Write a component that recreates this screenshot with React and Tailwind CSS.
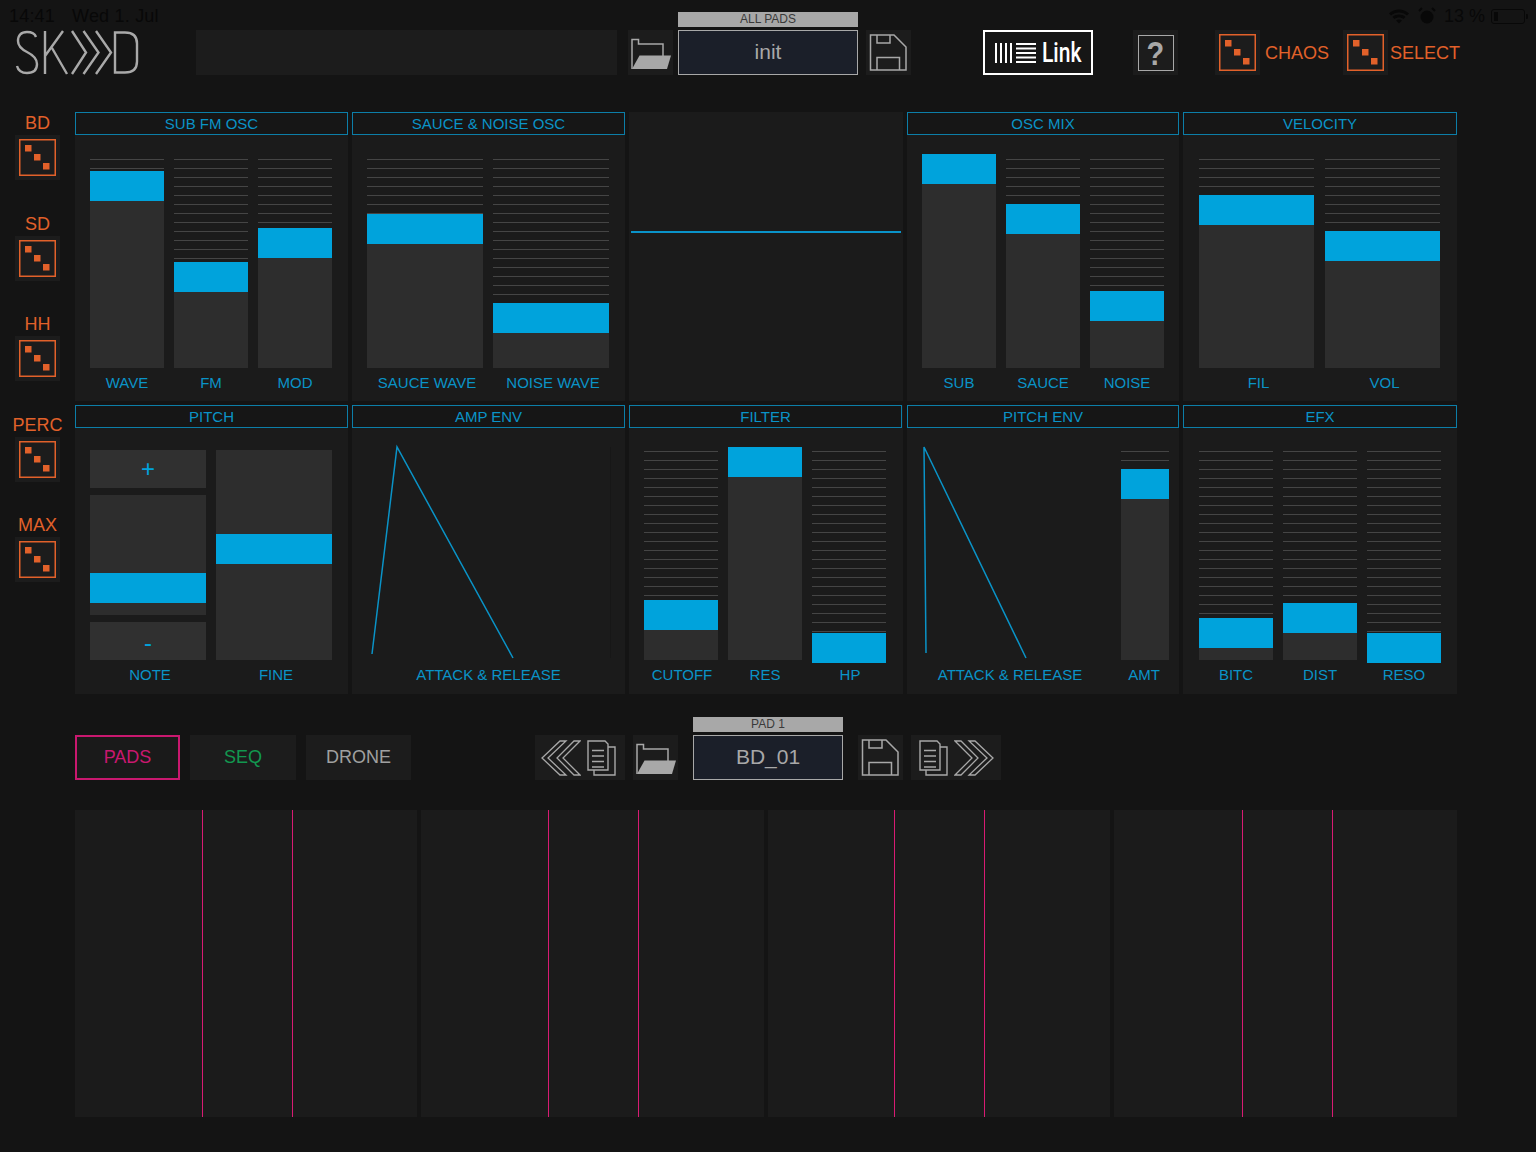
import React from "react";

function Dice() {
  return (
    <div className="w-[45px] h-[45px] bg-[#1c1c1c] flex items-center justify-center shrink-0">
      <svg width="37" height="37" viewBox="0 0 37 37">
        <rect x="0.75" y="0.75" width="35.5" height="35.5" fill="none" stroke="#e2612a" strokeWidth="1.5" />
        <rect x="6" y="6" width="6.5" height="6.5" fill="#e2612a" />
        <rect x="15" y="15" width="6.5" height="6.5" fill="#e2612a" />
        <rect x="24" y="24" width="6.5" height="6.5" fill="#e2612a" />
      </svg>
    </div>
  );
}

function FolderIcon() {
  return (
    <svg width="45" height="45" viewBox="0 0 45 45">
      <path d="M4 39V9.500h6.500V14H35v12" fill="none" stroke="#a8a8a8" strokeWidth="1.500" />
      <path d="M11.500 25.500H43L39 39H4z" fill="#a8a8a8" />
    </svg>
  );
}

function SaveIcon() {
  return (
    <svg width="45" height="45" viewBox="0 0 45 45">
      <path d="M4.500 5H28l12 12v23H4.500z" fill="none" stroke="#a8a8a8" strokeWidth="1.500" />
      <path d="M11 5v8h13V5M11 40V27.500h22.500V40" fill="none" stroke="#a8a8a8" strokeWidth="1.500" />
    </svg>
  );
}

function CopyIcon() {
  return (
    <svg width="29" height="36" viewBox="0 0 29 36">
      <path d="M1 1h17l3 3v26H1z" fill="none" stroke="#a8a8a8" strokeWidth="1.400" />
      <path d="M21 7h7v28H7v-5" fill="none" stroke="#a8a8a8" strokeWidth="1.400" />
      <path d="M5 10.500h12M5 16h12M5 21.500h12M5 27h12" stroke="#a8a8a8" strokeWidth="1.400" />
    </svg>
  );
}

function Chevrons({ flip }) {
  return (
    <svg width="40" height="36" viewBox="0 0 40 36" className={flip ? "-scale-x-100" : ""}>
      <path
        d="M1 1h6l17 17L7 35H1l17-17zM15 1h6l18 17-18 17h-6l18-17z"
        fill="none"
        stroke="#a8a8a8"
        strokeWidth="1.300"
      />
    </svg>
  );
}

function Logo() {
  return (
    <svg width="125" height="46" viewBox="0 0 125 46">
      <g fill="none" stroke="#a9a9a9" strokeWidth="2.400">
        <path d="M21 7c-1-3-4-5-9-5C6 2 3 5 3 11c0 5 3 8 9 11 6 3 10 6 10 12 0 6-4 9-10 9-6 0-9-3-10-7" />
        <path d="M30 1v43M30 26 48 1M37 18l15 26" />
        <path d="M57 1l14 21.500L57 44M68.500 1l15 21.500L68.500 44M81 1l15 21.500L81 44" />
        <path d="M100 2.500h10c8 0 12 4 12 11v18c0 7-4 11-12 11h-10z" />
      </g>
    </svg>
  );
}

function Header({ children, className = "" }) {
  return (
    <div className={`h-[23px] border border-[#0c7ea8] flex items-center justify-center text-[15px] text-[#0a93c7] bg-[#161616] leading-none ${className}`}>
      {children}
    </div>
  );
}

function Label({ children, className = "" }) {
  return <div className={`text-[15px] leading-none text-[#0a93c7] text-center ${className}`}>{children}</div>;
}

function Slider({ w, top, label, labelOffset = 0 }) {
  return (
    <div className="flex flex-col" style={{ width: w }}>
      <div className="relative h-[210px] bg-[repeating-linear-gradient(to_bottom,transparent_0,transparent_1px,#454545_1px,#454545_2px,transparent_2px,transparent_9px)]">
        <div className="absolute left-0 right-0 bottom-0 bg-[#2d2d2d]" style={{ top: top + 30 }} />
        <div className="absolute left-0 right-0 h-[30px] bg-[#00a3dc]" style={{ top }} />
      </div>
      <Label className="mt-[7px]">
        <span className="relative" style={{ left: labelOffset }}>{label}</span>
      </Label>
    </div>
  );
}

function Panel({ title, children, headerClass = "" }) {
  return (
    <div className="bg-[#1b1b1b] flex flex-col">
      <Header className={headerClass}>{title}</Header>
      {children}
    </div>
  );
}

function Sliders({ items, w, gap = 10, px = 15, pt = 23 }) {
  return (
    <div className="flex" style={{ paddingLeft: px, gap, paddingTop: pt }}>
      {items.map((it) => (
        <Slider key={it.label} w={w} top={it.top} label={it.label} labelOffset={it.off || 0} />
      ))}
    </div>
  );
}

function Side({ name }) {
  return (
    <div className="h-[100.500px] flex flex-col items-center">
      <div className="text-[18px] leading-[22px] text-[#e2612a] whitespace-nowrap">{name}</div>
      <div className="mt-[1px]">
        <Dice />
      </div>
    </div>
  );
}

function IconBox({ children, className = "" }) {
  return <div className={`h-[45px] bg-[#1c1c1c] flex items-center justify-center shrink-0 ${className}`}>{children}</div>;
}

function Display({ title, value, w }) {
  return (
    <div className="flex flex-col gap-[3px]" style={{ width: w }}>
      <div className="h-[15px] bg-[#a8a8a8] text-[#3a3a3a] text-[12px] leading-[15px] text-center">{title}</div>
      <div className="h-[45px] bg-[#1b1f29] border-[1.500px] border-[#a8a8a8] flex items-center justify-center text-[#a8a8a8] text-[21px] pb-[2px]">
        {value}
      </div>
    </div>
  );
}

function PadGroup({ w, pl }) {
  return (
    <div className="bg-[#1b1b1b] flex" style={{ width: w, paddingLeft: pl }}>
      <div className="w-[1px] bg-[#d81b73]" />
      <div className="w-[89px]" />
      <div className="w-[1px] bg-[#d81b73]" />
    </div>
  );
}

export default function App() {
  return (
    <div
      className="w-[1536px] h-[1152px] bg-[#141414] overflow-hidden flex flex-col text-[#a8a8a8]"
      style={{ fontFamily: '"Liberation Sans", Arial, sans-serif' }}
    >
      {/* status bar */}
      <div className="h-[12px] relative">
        <div className="absolute left-[9px] top-[6px] flex gap-[17px] text-[18px] leading-[20px] text-[#080808] tracking-[0.2px]">
          <span>14:41</span>
          <span>Wed 1. Jul</span>
        </div>
        <div className="absolute left-[1388px] top-[6px] flex items-center text-[#080808]">
          <svg width="22" height="16" viewBox="0 0 22 16">
            <path d="M1 5.500C6.500 0 15.500 0 21 5.500l-2 2C14.500 3.500 7.500 3.500 3 7.500zM4.500 9c3.500-3.200 9.500-3.200 13 0l-2 2c-2.500-2-6.500-2-9 0zM8 12.500c1.500-1.200 4.500-1.200 6 0L11 15.500z" fill="#080808" />
          </svg>
          <svg width="18" height="18" viewBox="0 0 18 18" className="ml-[8px]">
            <circle cx="9" cy="10" r="6.500" fill="#080808" />
            <path d="M1 4l3-3M17 4l-3-3" stroke="#080808" strokeWidth="2" />
          </svg>
          <span className="ml-[8px] text-[18px] leading-[20px]">13 %</span>
          <div className="ml-[6px] w-[34px] h-[15px] border border-[#080808] rounded-[3px] p-[2px]">
            <div className="w-[4px] h-full bg-[#080808]" />
          </div>
          <div className="ml-[1px] w-[2px] h-[5px] bg-[#080808] rounded-r-[1px]" />
        </div>
      </div>

      {/* top bar */}
      <div className="h-[63px] flex items-start">
        <div className="ml-[15px] mt-[18px] w-[125px]">
          <Logo />
        </div>
        <div className="ml-[56px] mt-[18px] w-[421px] h-[45px] bg-[#1c1c1c]" />
        <IconBox className="ml-[11px] mt-[18px] w-[45px]"><FolderIcon /></IconBox>
        <div className="ml-[5px]">
          <Display title="ALL PADS" value="init" w={180} />
        </div>
        <IconBox className="ml-[8px] mt-[18px] w-[45px]"><SaveIcon /></IconBox>
        <div className="ml-[72px] mt-[18px] w-[110px] h-[45px] border-2 border-white flex items-center pl-[10px] bg-[#161616]">
          <svg width="41" height="20" viewBox="0 0 41 20" className="shrink-0">
            <path d="M1 0v20M6 0v20M11 0v20M16 0v20" stroke="#fff" strokeWidth="2" />
            <path d="M21 1h20M21 5.500h20M21 10h20M21 14.500h20M21 19h20" stroke="#fff" strokeWidth="2" />
          </svg>
          <span className="ml-[6px] pt-[1px] text-white text-[27px] leading-none font-medium font-['Roboto',sans-serif] scale-x-[0.78] origin-left">Link</span>
        </div>
        <IconBox className="ml-[40px] mt-[18px] w-[45px]">
          <div className="w-[36px] h-[36px] border-[1.500px] border-[#a8a8a8] flex items-center justify-center text-[#a8a8a8] text-[34px] font-bold leading-none">
            <span className="scale-x-[0.85]">?</span>
          </div>
        </IconBox>
        <div className="ml-[37px] mt-[18px]"><Dice /></div>
        <div className="ml-[5px] mt-[18px] pt-[1px] h-[45px] flex items-center text-[18px] text-[#e2612a] w-[78px]">CHAOS</div>
        <div className="mt-[18px]"><Dice /></div>
        <div className="ml-[2px] mt-[18px] pt-[1px] h-[45px] flex items-center text-[18px] text-[#e2612a]">SELECT</div>
      </div>

      {/* main */}
      <div className="flex mt-[37px]">
        <div className="w-[75px] flex flex-col">
          {["BD", "SD", "HH", "PERC", "MAX"].map((n) => (
            <Side key={n} name={n} />
          ))}
        </div>
        <div className="grid grid-cols-[273px_273px_274px_272px_274px] grid-rows-[289px_289px] gap-[4px]">
          <Panel title="SUB FM OSC">
            <Sliders w={74} items={[
              { label: "WAVE", top: 13 },
              { label: "FM", top: 104 },
              { label: "MOD", top: 70 },
            ]} />
          </Panel>
          <Panel title="SAUCE & NOISE OSC">
            <Sliders w={116} items={[
              { label: "SAUCE WAVE", top: 56, off: 2 },
              { label: "NOISE WAVE", top: 145, off: 2 },
            ]} />
          </Panel>
          <div className="bg-[#1b1b1b] flex flex-col">
            <div className="mt-[119px] h-[2px] bg-[#0a93c9] ml-[2px] mr-[2px]" />
          </div>
          <Panel title="OSC MIX">
            <Sliders w={74} items={[
              { label: "SUB", top: -4 },
              { label: "SAUCE", top: 46 },
              { label: "NOISE", top: 133 },
            ]} />
          </Panel>
          <Panel title="VELOCITY">
            <Sliders w={115} gap={11} px={16} items={[
              { label: "FIL", top: 37, off: 2 },
              { label: "VOL", top: 73, off: 2 },
            ]} />
          </Panel>

          <Panel title="PITCH" headerClass="pb-[1px]">
            <div className="flex pt-[22px] pl-[15px] gap-[10px]">
              <div className="w-[116px]">
                <div className="h-[210px] flex flex-col gap-[7px]">
                  <div className="h-[38px] bg-[#303030] flex items-center justify-center text-[#00a3dc] text-[24px] leading-none">+</div>
                  <div className="flex-1 relative bg-[#2d2d2d]">
                    <div className="absolute left-0 right-0 h-[30px] bg-[#00a3dc] top-[78px]" />
                  </div>
                  <div className="h-[38px] bg-[#303030] flex items-center justify-center text-[#00a3dc] text-[24px] leading-none pt-[3px]">-</div>
                </div>
                <Label className="mt-[7px] pl-[4px]">NOTE</Label>
              </div>
              <div className="w-[116px]">
                <div className="h-[210px] relative bg-[#2d2d2d]">
                  <div className="absolute left-0 right-0 h-[30px] bg-[#00a3dc] top-[84px]" />
                </div>
                <Label className="mt-[7px] pl-[4px]">FINE</Label>
              </div>
            </div>
          </Panel>
          <Panel title="AMP ENV" headerClass="pb-[1px]">
            <svg width="273" height="236" viewBox="0 0 273 236" className="block">
              <path d="M258.500 19v211" stroke="#171717" strokeWidth="1" />
              <polyline points="20,226 45,19 161,230" fill="none" stroke="#0a93c7" strokeWidth="1.500" />
            </svg>
            <Label className="mt-[3px]">ATTACK &amp; RELEASE</Label>
          </Panel>
          <Panel title="FILTER" headerClass="mr-[1px] pb-[1px]">
            <Sliders w={74} pt={22} items={[
              { label: "CUTOFF", top: 150, off: 1 },
              { label: "RES", top: -3 },
              { label: "HP", top: 183, off: 1 },
            ]} />
          </Panel>
          <Panel title="PITCH ENV" headerClass="pb-[1px]">
            <div className="flex">
              <div className="w-[214px] shrink-0">
                <svg width="214" height="236" viewBox="0 0 214 236" className="block">
                  <polyline points="19,225 17,19 119,230" fill="none" stroke="#0a93c7" strokeWidth="1.500" />
                </svg>
                <Label className="mt-[3px] w-[206px]">ATTACK &amp; RELEASE</Label>
              </div>
              <div className="pt-[22px]">
                <Slider w={48} top={19} label="AMT" labelOffset={-1} />
              </div>
            </div>
          </Panel>
          <Panel title="EFX" headerClass="pb-[1px]">
            <Sliders w={74} px={16} pt={22} items={[
              { label: "BITC", top: 168 },
              { label: "DIST", top: 153 },
              { label: "RESO", top: 183 },
            ]} />
          </Panel>
        </div>
      </div>

      {/* transport */}
      <div className="h-[63px] mt-[23px] flex items-end">
        <div className="ml-[75px] w-[105px] h-[45px] border-2 border-[#c9186f] bg-[#1a1a1a] flex items-center justify-center text-[18px] text-[#c9186f]">PADS</div>
        <div className="ml-[10px] w-[106px] h-[45px] bg-[#1c1c1c] flex items-center justify-center text-[18px] text-[#12974f]">SEQ</div>
        <div className="ml-[10px] w-[105px] h-[45px] bg-[#1c1c1c] flex items-center justify-center text-[18px] text-[#a0a0a0]">DRONE</div>
        <IconBox className="ml-[124px] w-[90px] gap-[6px] !justify-start pl-[6px]"><Chevrons flip /><CopyIcon /></IconBox>
        <IconBox className="ml-[8px] w-[45px]"><FolderIcon /></IconBox>
        <div className="ml-[15px]"><Display title="PAD 1" value="BD_01" w={150} /></div>
        <IconBox className="ml-[15px] w-[45px]"><SaveIcon /></IconBox>
        <IconBox className="ml-[8px] w-[90px] gap-[6px]"><CopyIcon /><Chevrons /></IconBox>
      </div>

      {/* pads */}
      <div className="mt-[30px] ml-[75px] h-[307px] flex gap-[4px]">
        <PadGroup w={342} pl={127} />
        <PadGroup w={343} pl={127} />
        <PadGroup w={342} pl={126} />
        <PadGroup w={343} pl={128} />
      </div>
    </div>
  );
}
